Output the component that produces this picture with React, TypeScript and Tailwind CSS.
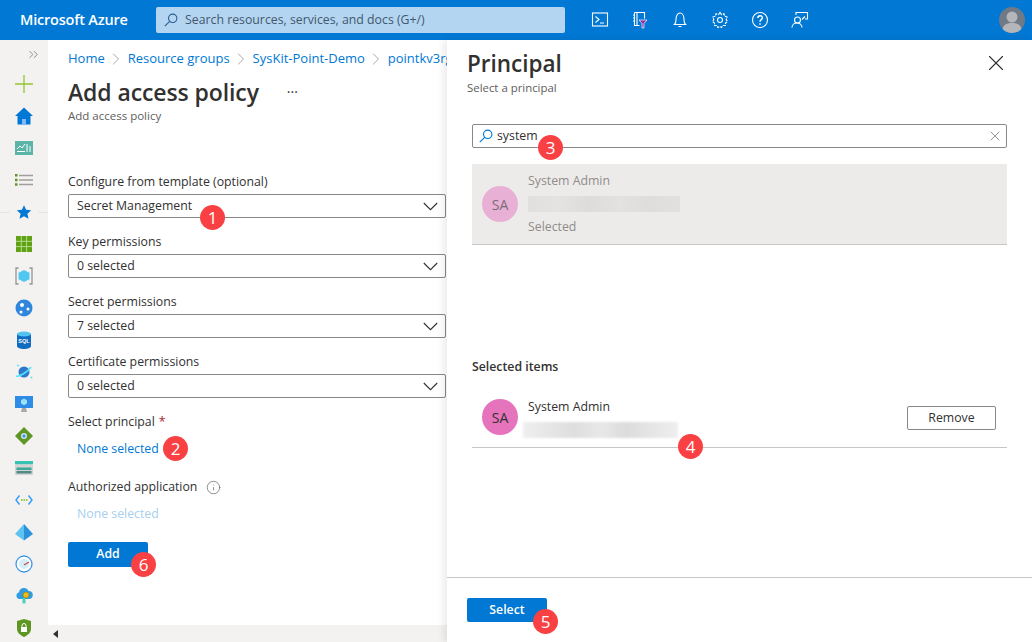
import type { ReactNode } from "react";
import { ChevronRight, ChevronsRight, Info, X } from "lucide-react";

const font = { fontFamily: '"Open Sans", "Noto Sans", sans-serif' };

function Badge({ n, className }: { n: number; className: string }) {
  return (
    <span
      className={`absolute z-20 flex h-[25px] w-[25px] items-center justify-center rounded-full bg-[#f94144] text-[17px] leading-none text-white ${className}`}
    >
      {n}
    </span>
  );
}

function SearchGlyph({ className }: { className: string }) {
  return (
    <svg width="14" height="14" viewBox="0 0 14 14" fill="none" stroke="currentColor" strokeWidth="1.1" className={className}>
      <circle cx="8.700" cy="5.300" r="4.200" />
      <path d="M5.700 8.300.8 13.200" />
    </svg>
  );
}

function Dropdown({ label, value, badge }: { label: string; value: string; badge?: ReactNode }) {
  return (
    <div className="h-[60px]">
      <div className="flex h-[24px] items-center text-[12.3px] leading-none text-[#323130]">{label}</div>
      <div className="relative flex h-[24px] items-center justify-between rounded-[2px] border border-[#8a8886] pl-[8px] pr-[7px] text-[12.3px] text-[#323130]">
        <span>{value}</span>
        <svg width="15" height="9" viewBox="0 0 15 9" fill="none" stroke="#323130" strokeWidth="1.100">
          <path d="M.8 1 7.500 7.700 14.200 1" />
        </svg>
        {badge}
      </div>
    </div>
  );
}

function TopIcon({ children }: { children: ReactNode }) {
  return (
    <div className="flex h-10 w-10 items-center justify-center">
      <svg width="18" height="18" viewBox="0 0 18 18" fill="none" stroke="white" strokeWidth="1.1">
        {children}
      </svg>
    </div>
  );
}

function Topbar() {
  return (
    <header className="flex h-10 shrink-0 items-center bg-[#0078d4] text-white">
      <div className="w-[156px] pl-[20px] text-[14.5px] font-semibold tracking-[-0.2px]">Microsoft Azure</div>
      <div className="flex h-[26px] w-[409px] items-center rounded-[2px] bg-[#b3d5f1] pl-[8px] text-[12.3px] text-[#44586c]">
        <SearchGlyph className="mr-[7px] text-[#2a5d8f]" />
        Search resources, services, and docs (G+/)
      </div>
      <div className="ml-[15px] flex">
        <TopIcon>
          <rect x="1.500" y="2" width="15" height="13" />
          <path d="M4.500 5.500 8 8.500 4.500 11.500M9 12h4" />
        </TopIcon>
        <TopIcon>
          <path d="M3.500 1.500h10v6M3.500 1.500v13h5M6 1.500v13M2 4h1.500M2 7h1.500M2 10h1.500" />
          <path d="M8 9h8l-3 3.500V17h-2v-4.500z" fill="#8c2fa6" stroke="white" strokeWidth="0.7" />
        </TopIcon>
        <TopIcon>
          <path d="M3.500 13.500c1.200-1 1.500-2.500 1.500-5C5 5 6.500 2 9 2s4 3 4 6.500c0 2.500.3 4 1.500 5zM7.500 15.500h3" />
        </TopIcon>
        <TopIcon>
          <circle cx="9" cy="9" r="2.500" />
          <path
            strokeDasharray="3 1"
            d="M9 1.500 10.500 3.500 13 2.800 13.600 5.300 16.200 6 15.200 8.500 16.500 10.500 14.500 12 14.500 14.500 12 14.500 10.500 16.500 9 15.500 6.800 16.500 6 14.500 3.500 14.500 3.500 12 1.500 10.500 2.800 8.500 1.800 6 4.400 5.300 5 2.800 7.500 3.500z"
          />
        </TopIcon>
        <TopIcon>
          <circle cx="9" cy="9" r="7.500" />
          <path d="M6.800 7c0-3 4.600-3 4.600-.2 0 1.800-2.400 1.800-2.400 4" strokeWidth="1.500" />
          <path d="M9 12.300v1.500" strokeWidth="1.500" />
        </TopIcon>
        <TopIcon>
          <path d="M5 4V1.500h11.500V8H14" />
          <circle cx="6.500" cy="9" r="3" />
          <path d="M1 16.500c0-6 10-6 10 0M11 8.500l3-3" />
        </TopIcon>
      </div>
      <div className="ml-auto mr-[7px] flex h-[26px] w-[26px] items-end justify-center overflow-hidden rounded-full bg-[#6f7a86]">
        <svg width="26" height="26" viewBox="0 0 26 26" fill="#b4b6b9">
          <circle cx="13" cy="10" r="5.500" />
          <path d="M3 26c0-8 4-10 10-10s10 2 10 10z" />
        </svg>
      </div>
    </header>
  );
}

function Rail({ children }: { children: ReactNode }) {
  return <div className="flex h-[32px] w-full shrink-0 items-center justify-center">{children}</div>;
}

function Sidebar() {
  return (
    <aside className="flex w-12 shrink-0 flex-col items-center overflow-hidden bg-[#f3f2f1]">
      <div className="flex h-[28px] w-full shrink-0 items-center justify-end pr-[7px]">
        <ChevronsRight size={15} strokeWidth={1.1} className="text-[#605e5c]" />
      </div>
      <Rail>
        <svg width="18" height="18" viewBox="0 0 18 18" stroke="#7fba00" strokeWidth="1.300" fill="none">
          <path d="M9 0v18M0 9h18" opacity="0.8" />
        </svg>
      </Rail>
      <Rail>
        <svg width="18" height="18" viewBox="0 0 18 18">
          <path d="M9 .5 0 9h2.500v8.500h13V9H18z" fill="#0078d4" />
          <path d="M7 12h4v5.500H7z" fill="#83b9f9" />
        </svg>
      </Rail>
      <Rail>
        <svg width="18" height="14" viewBox="0 0 18 14">
          <rect width="18" height="14" fill="#5ab5a8" />
          <path d="M2 8 5 5 7 7 10 3" stroke="white" fill="none" />
          <path d="M12 3v8M15 5v6M2 10.500h8" stroke="white" />
        </svg>
      </Rail>
      <Rail>
        <svg width="18" height="12" viewBox="0 0 18 12">
          <path d="M4 1.500h14M4 6h14M4 10.500h14" stroke="#a19f9d" strokeWidth="1.500" />
          <path d="M0 0h2.500v2.500H0zM0 4.700h2.500v2.500H0zM0 9.300h2.500v2.500H0z" fill="#5e9624" />
        </svg>
      </Rail>
      <Rail>
        <div className="flex w-full items-center gap-[8px]">
          <div className="h-px flex-1 bg-[#e8e6e4]" />
          <svg width="12" height="12" viewBox="0 0 24 24" fill="#0078d4" className="scale-125">
            <path d="M12 1l3.400 7.400 8.100.9-6 5.500 1.700 8L12 18.700 4.800 22.800l1.700-8-6-5.500 8.100-.9z" />
          </svg>
          <div className="h-px flex-1 bg-[#e8e6e4]" />
        </div>
      </Rail>
      <Rail>
        <svg width="16" height="16" viewBox="0 0 16 16">
          <rect width="16" height="16" fill="#5ea213" />
          <path d="M5.300 0v16M10.600 0v16M0 5.300h16M0 10.600h16" stroke="#b5d98a" />
        </svg>
      </Rail>
      <Rail>
        <svg width="18" height="18" viewBox="0 0 18 18" fill="none">
          <path d="M3.500 1H1v16h2.500M14.500 1H17v16h-2.500" stroke="#949494" strokeWidth="1.300" />
          <path d="M9 3 14.500 5.800v6.400L9 15l-5.500-2.800V5.800z" fill="#50c7f0" />
        </svg>
      </Rail>
      <Rail>
        <svg width="18" height="18" viewBox="0 0 18 18">
          <circle cx="9" cy="9" r="8.500" fill="#2f86dc" />
          <circle cx="7" cy="6" r="2" fill="white" />
          <circle cx="13" cy="10" r="1.500" fill="white" />
          <circle cx="6" cy="13" r="1.500" fill="white" />
        </svg>
      </Rail>
      <Rail>
        <svg width="14" height="18" viewBox="0 0 14 18">
          <path d="M0 3v12c0 4 14 4 14 0V3z" fill="#0f6cc1" />
          <ellipse cx="7" cy="3" rx="7" ry="2.500" fill="#54c2ee" />
          <text x="7" y="12" fontSize="5.500" fontWeight="700" textAnchor="middle" fill="white" fontFamily="Liberation Sans">
            SQL
          </text>
        </svg>
      </Rail>
      <Rail>
        <svg width="18" height="18" viewBox="0 0 18 18" fill="none">
          <circle cx="9" cy="9" r="5.500" fill="#2f78cc" />
          <path d="M1 13c3 1 12-4 15-9" stroke="#50e6ff" strokeWidth="1.500" />
          <path d="M15.500 14.500h2M16.500 13.500v2M2 2.500h2M3 1.500v2" stroke="#50e6ff" />
        </svg>
      </Rail>
      <Rail>
        <svg width="18" height="17" viewBox="0 0 18 17">
          <rect width="18" height="12" fill="#2e8ce6" />
          <path d="M9 2.500 12 4.200v3.300L9 9.200 6 7.500V4.200z" fill="#9be0f5" />
          <path d="M7 12h4l1 4H6z" fill="#a8a8a8" />
        </svg>
      </Rail>
      <Rail>
        <svg width="18" height="18" viewBox="0 0 18 18">
          <path d="M9 0 18 9 9 18 0 9z" fill="#5e9624" />
          <circle cx="9" cy="9" r="3" fill="#c5e0fb" />
          <circle cx="9" cy="9" r="1.500" fill="#3a8ad8" />
        </svg>
      </Rail>
      <Rail>
        <svg width="18" height="14" viewBox="0 0 18 14">
          <rect width="18" height="3.500" fill="#37c2b1" />
          <rect y="3.500" width="18" height="10.500" fill="#d6d4d2" />
          <rect x="1.500" y="6.500" width="15" height="2.500" fill="#37a89a" />
          <rect x="1.500" y="10" width="15" height="2.500" fill="#4d8c86" />
        </svg>
      </Rail>
      <Rail>
        <svg width="18" height="10" viewBox="0 0 18 10" fill="none">
          <path d="M4.500.500 1 5l3.500 4.500" stroke="#2f9df4" strokeWidth="1.400" />
          <path d="M13.500.500 17 5l-3.500 4.500" stroke="#2f9df4" strokeWidth="1.400" />
          <path d="M6 5h6.500" stroke="#7fba00" strokeWidth="1.500" strokeDasharray="1.500 1" />
        </svg>
      </Rail>
      <Rail>
        <svg width="18" height="17" viewBox="0 0 18 17">
          <path d="M9 0 0 10l9 6.500z" fill="#5fc3f0" />
          <path d="M9 0l9 10-9 6.500z" fill="#2b93de" />
        </svg>
      </Rail>
      <Rail>
        <svg width="18" height="18" viewBox="0 0 18 18" fill="none">
          <circle cx="9" cy="9" r="8" fill="white" stroke="#3f98e8" strokeWidth="1.300" />
          <circle cx="9" cy="9" r="5" fill="#d3eefa" />
          <path d="M9 10 14 7" stroke="#c94f3d" strokeWidth="1.200" />
        </svg>
      </Rail>
      <Rail>
        <svg width="18" height="18" viewBox="0 0 18 18">
          <path d="M4 12a3.500 3.500 0 0 1 0-6.800A5 5 0 0 1 13.500 4 4 4 0 0 1 14 12z" fill="#2f9de0" />
          <path d="M7.500 11h3v6l-1.500-1-1.500 1z" fill="#4fd0b8" />
          <circle cx="11" cy="8" r="3" fill="#f2b90f" stroke="#8f6f0a" strokeWidth="0.500" />
        </svg>
      </Rail>
      <Rail>
        <svg width="14" height="18" viewBox="0 0 14 18">
          <path d="M0 2 7 0l7 2v8c0 4-4 6.500-7 8-3-1.500-7-4-7-8z" fill="#5e9624" />
          <rect x="4" y="8" width="6" height="5" fill="white" />
          <path d="M5 8V6.500a2 2 0 0 1 4 0V8" stroke="white" fill="none" />
        </svg>
      </Rail>
    </aside>
  );
}

function Crumb({ text }: { text: string }) {
  return (
    <>
      <span className="whitespace-nowrap text-[#0078d4]">{text}</span>
      <ChevronRight size={20} strokeWidth={0.9} className="mx-[1.500px] shrink-0 text-[#8a8886]" />
    </>
  );
}

function PolicyForm() {
  return (
    <main className="relative flex min-w-0 flex-1 flex-col bg-white">
      <div className="h-[585px] shrink-0 overflow-hidden pl-[20px]">
        <nav className="flex h-[36px] items-center pt-[1px] text-[13px]">
          <Crumb text="Home" />
          <Crumb text="Resource groups" />
          <Crumb text="SysKit-Point-Demo" />
          <span className="whitespace-nowrap text-[#0078d4]">pointkv3rg</span>
        </nav>
        <div className="flex h-[32px] items-center">
          <h1 className="text-[23px] font-semibold leading-none tracking-[-0.1px] text-[#323130]">Add access policy</h1>
          <span className="ml-[28px] pb-[8px] text-[14px] leading-none text-[#323130]">...</span>
        </div>
        <div className="text-[11.500px] leading-[16px] text-[#605e5c]">Add access policy</div>

        <div className="mt-[46px] w-[378px]">
          <Dropdown label="Configure from template (optional)" value="Secret Management" badge={<Badge n={1} className="left-[131px] top-[10px]" />} />
          <Dropdown label="Key permissions" value="0 selected" />
          <Dropdown label="Secret permissions" value="7 selected" />
          <Dropdown label="Certificate permissions" value="0 selected" />
        </div>

        <div className="flex h-[24px] items-center text-[12.3px] text-[#323130]">
          Select principal <span className="ml-[4px] text-[#a4262c]">*</span>
        </div>
        <div className="relative mt-[3px] flex h-[24px] items-center pl-[9px] text-[12.3px] text-[#0078d4]">
          None selected
          <Badge n={2} className="left-[95px] top-[-1px]" />
        </div>
        <div className="mt-[14px] flex h-[24px] items-center text-[12.3px] text-[#323130]">
          Authorized application
          <Info size={15} strokeWidth={1.1} className="ml-[9px] text-[#605e5c]" />
        </div>
        <div className="mt-[3px] flex h-[24px] items-center pl-[9px] text-[12.3px] text-[#a6d0f0]">None selected</div>
        <div className="relative mt-[16px] w-[80px]">
          <button className="flex h-[25px] w-[80px] items-center justify-center rounded-[2px] bg-[#0078d4] text-[12.3px] font-semibold text-white">
            Add
          </button>
          <Badge n={6} className="left-[63px] top-[10px]" />
        </div>
      </div>
      <div className="flex h-[17px] items-center bg-[#f3f2f1] pl-[5px]">
        <span className="h-0 w-0 border-y-[4px] border-r-[5px] border-y-transparent border-r-[#323130]" />
      </div>
    </main>
  );
}

function PrincipalPanel() {
  return (
    <section className="absolute bottom-0 right-0 top-0 z-10 flex w-[585px] flex-col bg-white shadow-[-3px_0_8px_rgba(0,0,0,0.09)]">
      <div className="flex items-start justify-between pl-[20px] pr-[23px]">
        <div>
          <h2 className="mt-[8px] text-[22.500px] font-semibold leading-[31px] text-[#323130]">Principal</h2>
          <div className="mt-[2px] text-[11.400px] leading-[14px] text-[#605e5c]">Select a principal</div>
        </div>
        <X size={26} strokeWidth={1} className="mt-[10px] text-[#323130]" />
      </div>

      <div className="px-[25px]">
        <div className="relative mt-[29px] flex h-[24px] items-center rounded-[2px] border border-[#8a8886] pl-[6px] pr-[3px] text-[12.3px] text-[#323130]">
          <SearchGlyph className="mr-[4px] text-[#0078d4]" />
          system
          <X size={16} strokeWidth={1} className="ml-auto text-[#605e5c]" />
          <Badge n={3} className="left-[65px] top-[10px]" />
        </div>

        <div className="mt-[16px] flex h-[81px] items-center border-b border-[#c8c6c4] bg-[#edebe9] pl-[10px]">
          <div className="flex h-[36px] w-[36px] items-center justify-center rounded-full bg-[#e9b0d5] text-[14px] text-[#7a6e76]">SA</div>
          <div className="ml-[10px] pb-px">
            <div className="text-[12.3px] leading-[17px] text-[#8f8d8b]">System Admin</div>
            <div className="mb-[6px] mt-[7px] h-[16px] w-[152px] bg-[linear-gradient(90deg,#e2e0de,#e5e3e1,#dedcda,#e4e2e0,#dfdddb,#e3e1df)] blur-[0.5px]" />
            <div className="text-[12.3px] leading-[17px] text-[#8f8d8b]">Selected</div>
          </div>
        </div>

        <div className="mt-[112px] text-[12.3px] font-semibold leading-[20px] text-[#323130]">Selected items</div>

        <div className="relative mt-[11px] flex h-[60px] items-start border-b border-[#c8c6c4] pl-[10px] pr-[11px]">
          <div className="mt-[11px] flex h-[36px] w-[36px] items-center justify-center rounded-full bg-[#e674bd] text-[14px] text-[#323130]">SA</div>
          <div className="ml-[10px] mt-[10px]">
            <div className="text-[12.3px] leading-[17px] text-[#323130]">System Admin</div>
            <div className="-ml-[5px] mt-[7px] h-[16px] w-[155px] bg-[linear-gradient(90deg,#efefef,#e6e6e6,#dedede,#e8e8e8,#dcdcdc,#e6e6e6,#eeeeee)] blur-[1px]" />
          </div>
          <button className="ml-auto mt-[18px] flex h-[24px] w-[89px] items-center justify-center rounded-[2px] border border-[#8a8886] text-[12.3px] text-[#323130]">
            Remove
          </button>
          <Badge n={4} className="left-[206px] top-[46px]" />
        </div>
      </div>

      <div className="mt-auto flex h-[65px] items-start border-t border-[#c8c6c4] pl-[20px] pt-[20px]">
        <div className="relative">
          <button className="flex h-[24px] w-[80px] items-center justify-center rounded-[2px] bg-[#0078d4] text-[12.3px] font-semibold text-white">
            Select
          </button>
          <Badge n={5} className="left-[66px] top-[11px]" />
        </div>
      </div>
    </section>
  );
}

export default function App() {
  return (
    <div className="flex h-[642px] w-[1032px] flex-col overflow-hidden bg-white" style={font}>
      <Topbar />
      <div className="relative flex min-h-0 flex-1">
        <Sidebar />
        <PolicyForm />
        <PrincipalPanel />
      </div>
    </div>
  );
}
